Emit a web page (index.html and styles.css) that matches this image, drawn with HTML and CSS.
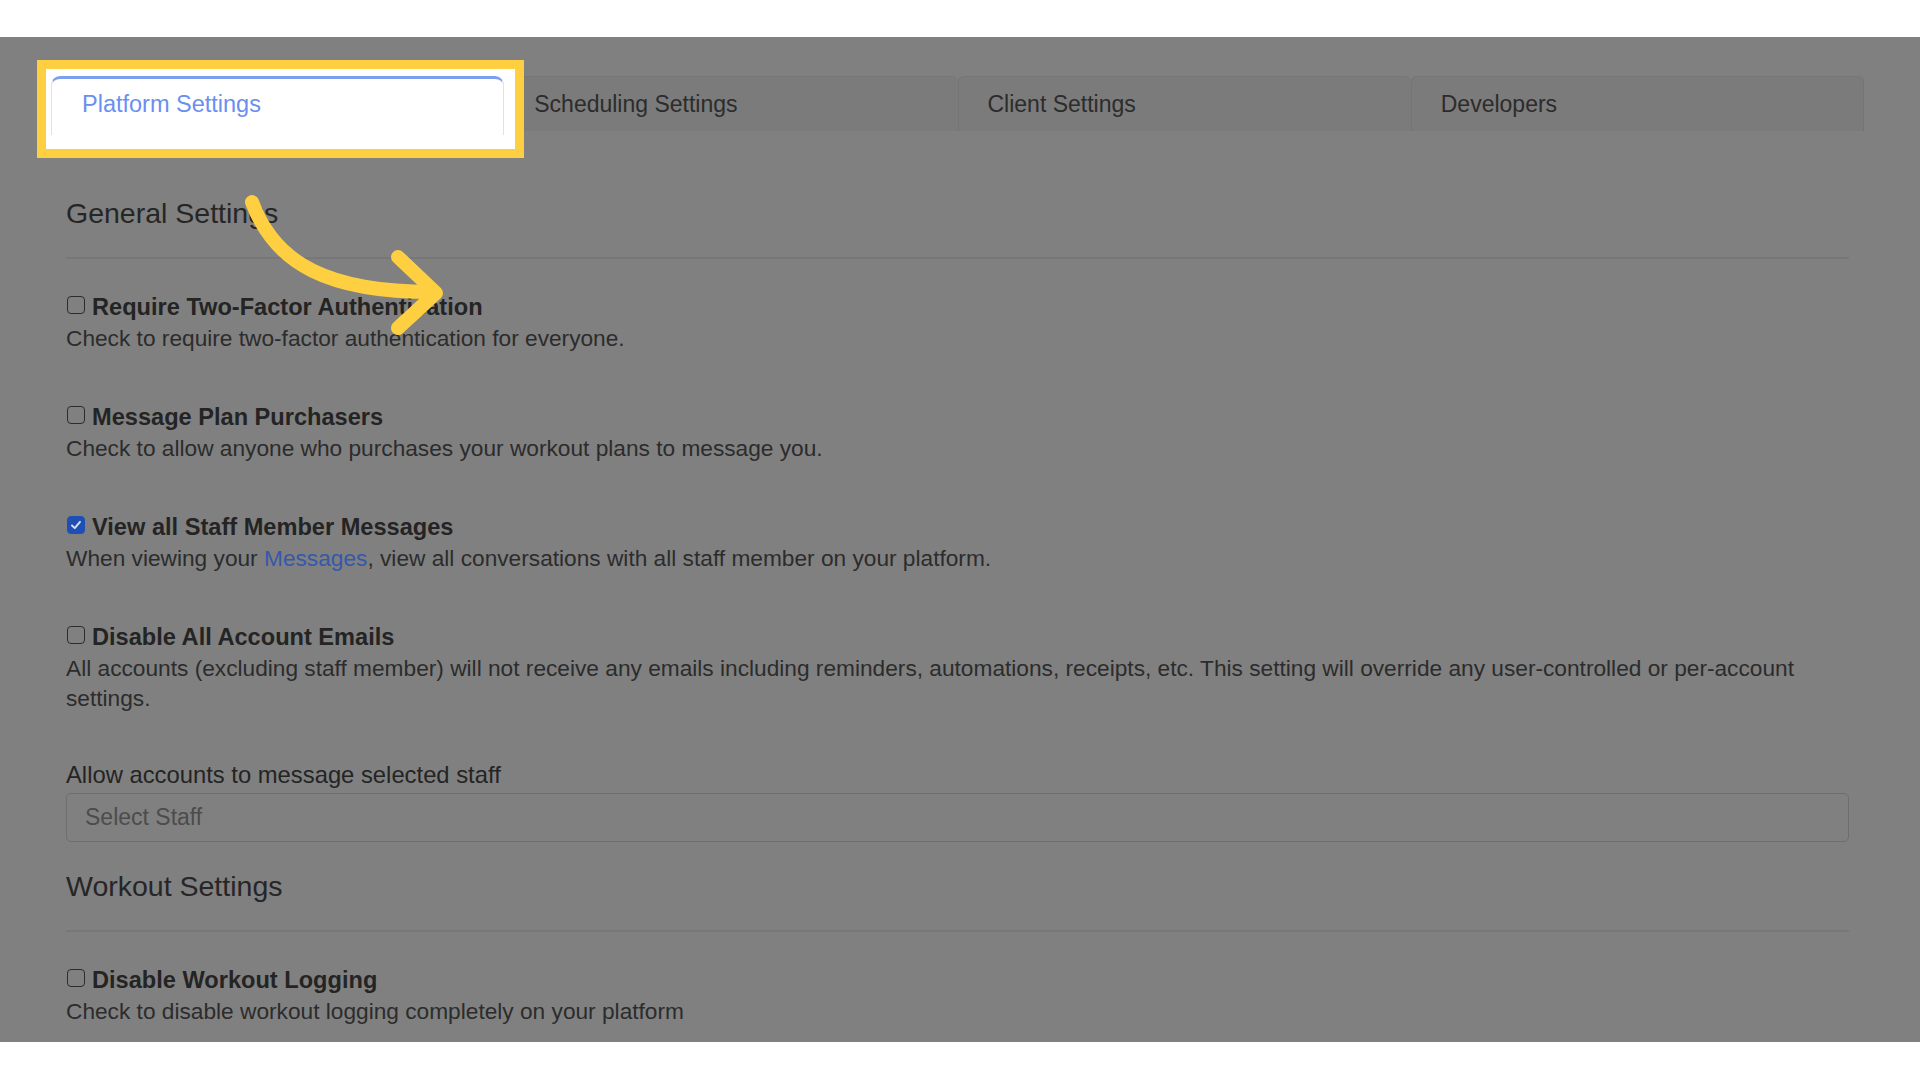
FILE: index.html
```html
<!DOCTYPE html>
<html lang="en">
<head>
<meta charset="utf-8">
<title>Platform Settings</title>
<link rel="stylesheet" href="styles.css">
</head>
<body>
<div class="topband"></div>
<main class="main">
  <div class="tabs-wrap">
    <div class="spot"></div>
    <nav class="tabs">
      <div class="tab active">Platform Settings</div>
      <div class="tab">Scheduling Settings</div>
      <div class="tab">Client Settings</div>
      <div class="tab">Developers</div>
    </nav>
  </div>
  <section class="content">
    <h3 class="heading first">General Settings</h3>
    <hr class="rule">
    <div class="setting">
      <div class="title"><span class="cb"></span>Require Two-Factor Authentication</div>
      <div class="desc">Check to require two-factor authentication for everyone.</div>
    </div>
    <div class="setting">
      <div class="title"><span class="cb"></span>Message Plan Purchasers</div>
      <div class="desc">Check to allow anyone who purchases your workout plans to message you.</div>
    </div>
    <div class="setting">
      <div class="title"><span class="cb checked"><svg viewBox="0 0 18 18" width="18" height="18"><path d="M4.5 9.5 L7.6 12.5 L13.5 5.5" fill="none" stroke="#d9def0" stroke-width="2.2" stroke-linecap="round" stroke-linejoin="round"/></svg></span>View all Staff Member Messages</div>
      <div class="desc">When viewing your <a class="link">Messages</a>, view all conversations with all staff member on your platform.</div>
    </div>
    <div class="setting">
      <div class="title"><span class="cb"></span>Disable All Account Emails</div>
      <div class="desc">All accounts (excluding staff member) will not receive any emails including reminders, automations, receipts, etc. This setting will override any user-controlled or per-account settings.</div>
    </div>
    <div class="field">
      <div class="label">Allow accounts to message selected staff</div>
      <div class="select">Select Staff</div>
    </div>
    <h3 class="heading">Workout Settings</h3>
    <hr class="rule">
    <div class="setting">
      <div class="title"><span class="cb"></span>Disable Workout Logging</div>
      <div class="desc">Check to disable workout logging completely on your platform</div>
    </div>
  </section>
</main>
<svg class="arrow" width="1920" height="1080" viewBox="0 0 1920 1080">
  <path d="M252 202 C 275 265, 330 292, 432 292" fill="none" stroke="#fecf40" stroke-width="14" stroke-linecap="round"/>
  <path d="M398 257 L436 293 L398 328" fill="none" stroke="#fecf40" stroke-width="14" stroke-linecap="round" stroke-linejoin="round"/>
</svg>
</body>
</html>
```
FILE: styles.css
```css
html, body {
  margin: 0;
  padding: 0;
}
body {
  width: 1920px;
  height: 1080px;
  background: #ffffff;
  font-family: "Liberation Sans", Arial, Helvetica, sans-serif;
  position: relative;
  overflow: hidden;
}
.topband {
  height: 37px;
  background: #ffffff;
}
.main {
  height: 1005px;
  background: #808080;
  padding: 0 56px 0 51px;
  box-sizing: border-box;
  overflow: hidden;
}
.tabs-wrap {
  position: relative;
  margin-top: 39px;
}
.spot {
  position: absolute;
  z-index: 1;
  left: -14px;
  top: -16px;
  width: 487px;
  height: 98px;
  box-sizing: border-box;
  border: 9px solid #fecf40;
  background: #ffffff;
}
.tabs {
  display: grid;
  grid-template-columns: repeat(4, 1fr);
}
.tab {
  height: 55px;
  box-sizing: border-box;
  display: flex;
  align-items: center;
  padding: 0 29px;
  font-size: 23px;
  color: #2c2c2c;
  background: #7b7b7b;
  border-top: 1px solid #777777;
  border-left: 1px solid #747474;
  border-radius: 6px 6px 0 0;
}
.tab:last-child {
  border-right: 1px solid #747474;
}
.tab.active {
  position: relative;
  z-index: 2;
  background: #ffffff;
  color: #6a8ff0;
  border-top: 3px solid #7d9ff1;
  border-left: 1px solid #e2e2e2;
  border-right: 1px solid #e2e2e2;
  border-radius: 9px 9px 0 0;
  padding: 0 29px 5px 30px;
  height: 59px;
  font-size: 23.5px;
}
.content {
  padding: 0 15px;
}
.heading {
  margin: 27px 0 0 0;
  font-size: 28.5px;
  line-height: 34px;
  font-weight: 400;
  color: #262626;
}
.heading.first {
  margin-top: 61px;
}
.rule {
  margin: 27px 0 0 0;
  border: 0;
  height: 2px;
  background: #777777;
}
.setting {
  margin-top: 48px;
  font-size: 22.7px;
}
.rule + .setting {
  margin-top: 32px;
}
.title {
  display: flex;
  align-items: center;
  font-size: 23.6px;
  font-weight: 700;
  color: #242424;
  line-height: 32px;
}
.cb {
  width: 18px;
  height: 18px;
  box-sizing: border-box;
  border: 1.6px solid #2c2c2c;
  border-radius: 4px;
  margin: -5px 7px 0 1px;
  flex: none;
  display: flex;
  align-items: center;
  justify-content: center;
}
.cb.checked {
  background: #1d4fb4;
  border-color: #1d4fb4;
}
.cb svg {
  display: block;
}
.desc {
  color: #2c2c2c;
  line-height: 30px;
}
.link {
  color: #3558ab;
}
.field {
  margin-top: 46px;
}
.label {
  font-size: 23.8px;
  line-height: 31px;
  color: #242424;
}
.select {
  margin-top: 3px;
  height: 49px;
  box-sizing: border-box;
  border: 1.6px solid #6e6e6e;
  border-radius: 5px;
  padding: 0 18px;
  display: flex;
  align-items: center;
  font-size: 23px;
  color: #4c4c4c;
}
.arrow {
  position: absolute;
  left: 0;
  top: 0;
  pointer-events: none;
}
```
